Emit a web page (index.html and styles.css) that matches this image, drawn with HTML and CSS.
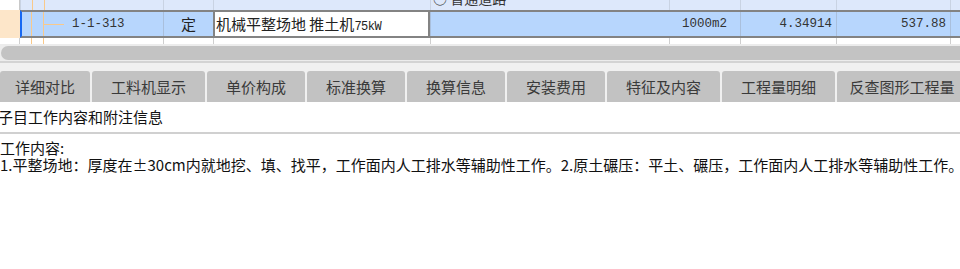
FILE: index.html
```html
<!DOCTYPE html>
<html lang="zh-CN">
<head>
    <meta charset="UTF-8">
    <title>定额子目</title>
    <link rel="stylesheet" href="styles.css">
</head>
<body>
    <div id='grid'>
        <div class='row row-top'>
            <div class='c0'></div>
            <div class='c1 tree'></div>
            <div class='c2'></div>
            <div class='c3'></div>
            <div class='c4'><span class='top-text'>○ 普通道路</span></div>
            <div class='c5'></div>
            <div class='c6'></div>
            <div class='c7'></div>
            <div class='c8'></div>
        </div>
        <div class='row row-sel'>
            <div class='c0 peach'></div>
            <div class='sel'>
                <div class='c1 tree code'><span class='branch'></span>1-1-313</div>
                <div class='c2 center'>定</div>
                <div class='c3 name'>机械平整场地 推土机<span class='small'>75kW</span></div>
                <div class='c4'></div>
                <div class='c5 center mono'>1000m2</div>
                <div class='c6 right mono'>4.34914</div>
                <div class='c7 right mono'>537.88</div>
                <div class='c8'></div>
            </div>
        </div>
        <div class='row row-tick'>
            <div class='c0'></div>
            <div class='c1 tree'></div>
            <div class='c2'></div>
            <div class='c3'></div>
            <div class='c4'></div>
            <div class='c5'></div>
            <div class='c6'></div>
            <div class='c7'></div>
            <div class='c8'></div>
        </div>
    </div>

    <div id='hscroll'>
        <div class='thumb'></div>
    </div>

    <ul id='tabs'>
        <li class='w90'>详细对比</li>
        <li class='w113'>工料机显示</li>
        <li class='w98'>单价构成</li>
        <li class='w98'>标准换算</li>
        <li class='w98'>换算信息</li>
        <li class='w98'>安装费用</li>
        <li class='w113'>特征及内容</li>
        <li class='w113'>工程量明细</li>
        <li class='w130'>反查图形工程量</li>
    </ul>

    <div id='panel'>
        <div class='panel-title'>子目工作内容和附注信息</div>
        <div class='panel-body'>
            <p>工作内容:</p>
            <p>1.平整场地：厚度在±30cm内就地挖、填、找平，工作面内人工排水等辅助性工作。2.原土碾压：平土、碾压，工作面内人工排水等辅助性工作。</p>
        </div>
    </div>
</body>
</html>
```

FILE: styles.css
```css
*{
    margin: 0;
    padding: 0;
    list-style: none;
    box-sizing: border-box;
}
body{
    width: 960px;
    height: 269px;
    overflow: hidden;
    background: #fff;
    font-family: "Noto Sans CJK SC", "Liberation Sans", sans-serif;
    color: #222;
}
#grid{
    width: 960px;
    overflow: hidden;
}
.row{
    display: flex;
}
.c0{ width: 20px; flex: none; }
.c1{ width: 143px; flex: none; }
.c2{ width: 50px; flex: none; }
.c3{ width: 217px; flex: none; }
.c4{ width: 239px; flex: none; }
.c5{ width: 71px; flex: none; }
.c6{ width: 96px; flex: none; }
.c7{ width: 114px; flex: none; }
.c8{ width: 20px; flex: none; }

/* tree guide lines */
.tree{
    background-image: linear-gradient(#f9c98a, #f9c98a), linear-gradient(#f9c98a, #f9c98a);
    background-size: 1px 100%, 1px 100%;
    background-position: 11px 0, 23px 0;
    background-repeat: no-repeat;
}

.row-top{
    height: 10px;
}
.row-top > div{
    background-color: #dde8fb;
    border-left: 1px solid #c9d3e3;
    overflow: hidden;
}
.row-top > .c0{
    background-color: #fff;
    border-left: none;
    border-right: 1px solid #c9c9c9;
}
.top-text{
    display: block;
    margin-top: -10px;
    padding-left: 2px;
    font-size: 14px;
    line-height: 16px;
    color: #333;
    white-space: nowrap;
}

.row-sel{
    height: 28px;
}
.peach{
    background: #fde6c9;
}
.sel{
    display: flex;
    flex: 1;
    background-color: #b7d6fd;
    border-top: 2px solid #838383;
    border-bottom: 2px solid #838383;
    border-left: 2px solid #1768f2;
    font-size: 15px;
    line-height: 24px;
    color: #222;
    white-space: nowrap;
}
.sel > div{
    border-left: 1px solid #a9bfdc;
}
.sel > .c1{
    width: 141px;
    border-left: none;
    background-position: 9px 0, 21px 0;
}
.code{
    display: flex;
    align-items: center;
    font-family: "Liberation Mono", monospace;
    font-size: 12.5px;
    color: #333;
}
.branch{
    width: 20px;
    height: 1px;
    margin-left: 22px;
    margin-right: 8px;
    background: #f9c98a;
}
.center{ text-align: center; }
.right{ text-align: right; padding-right: 4px; }
.mono{
    font-family: "Liberation Mono", monospace;
    font-size: 12.5px;
    color: #333;
}
.sel > .name{
    background: #fff;
    border-left: 2px solid #838383;
    border-right: 2px solid #838383;
    padding-left: 1px;
    font-size: 15px;
}
.small{
    font-family: "Liberation Mono", monospace;
    font-size: 12px;
    letter-spacing: -0.5px;
}
.sel > .c5{
    border-left: none;
}

.row-tick{
    height: 6px;
}
.row-tick > div{
    border-left: 1px solid #cfcfcf;
}
.row-tick > .c0{
    border-left: none;
    border-right: 1px solid #cfcfcf;
}
.row-tick > .c1{
    border-left: none;
}

#hscroll{
    height: 19px;
    background: #ececec;
    padding: 2px 0 3px 1px;
    border-bottom: 2px solid #d3d3d3;
}
.thumb{
    height: 14px;
    width: 980px;
    background: #c3c3c3;
    border-radius: 7px;
}

#tabs{
    display: flex;
    gap: 2px;
    height: 39px;
    padding-top: 8px;
    background: #f0f0f0;
    overflow: hidden;
    white-space: nowrap;
}
#tabs > li{
    flex: none;
    height: 31px;
    background: #c2c2c2;
    border-radius: 3px 3px 0 0;
    font-size: 15px;
    line-height: 31px;
    text-align: center;
    color: #3a3a3a;
}
.w90{ width: 90px; }
.w98{ width: 98px; }
.w113{ width: 113px; }
.w130{ width: 130px; }

#panel{
    background: #fff;
}
.panel-title{
    height: 32px;
    margin-left: -2px;
    font-size: 15px;
    line-height: 30px;
    color: #111;
    border-bottom: 2px solid #d0d0d0;
}
.panel-body{
    padding-top: 5px;
    font-size: 15px;
    line-height: 17px;
    color: #111;
    white-space: nowrap;
}
```
